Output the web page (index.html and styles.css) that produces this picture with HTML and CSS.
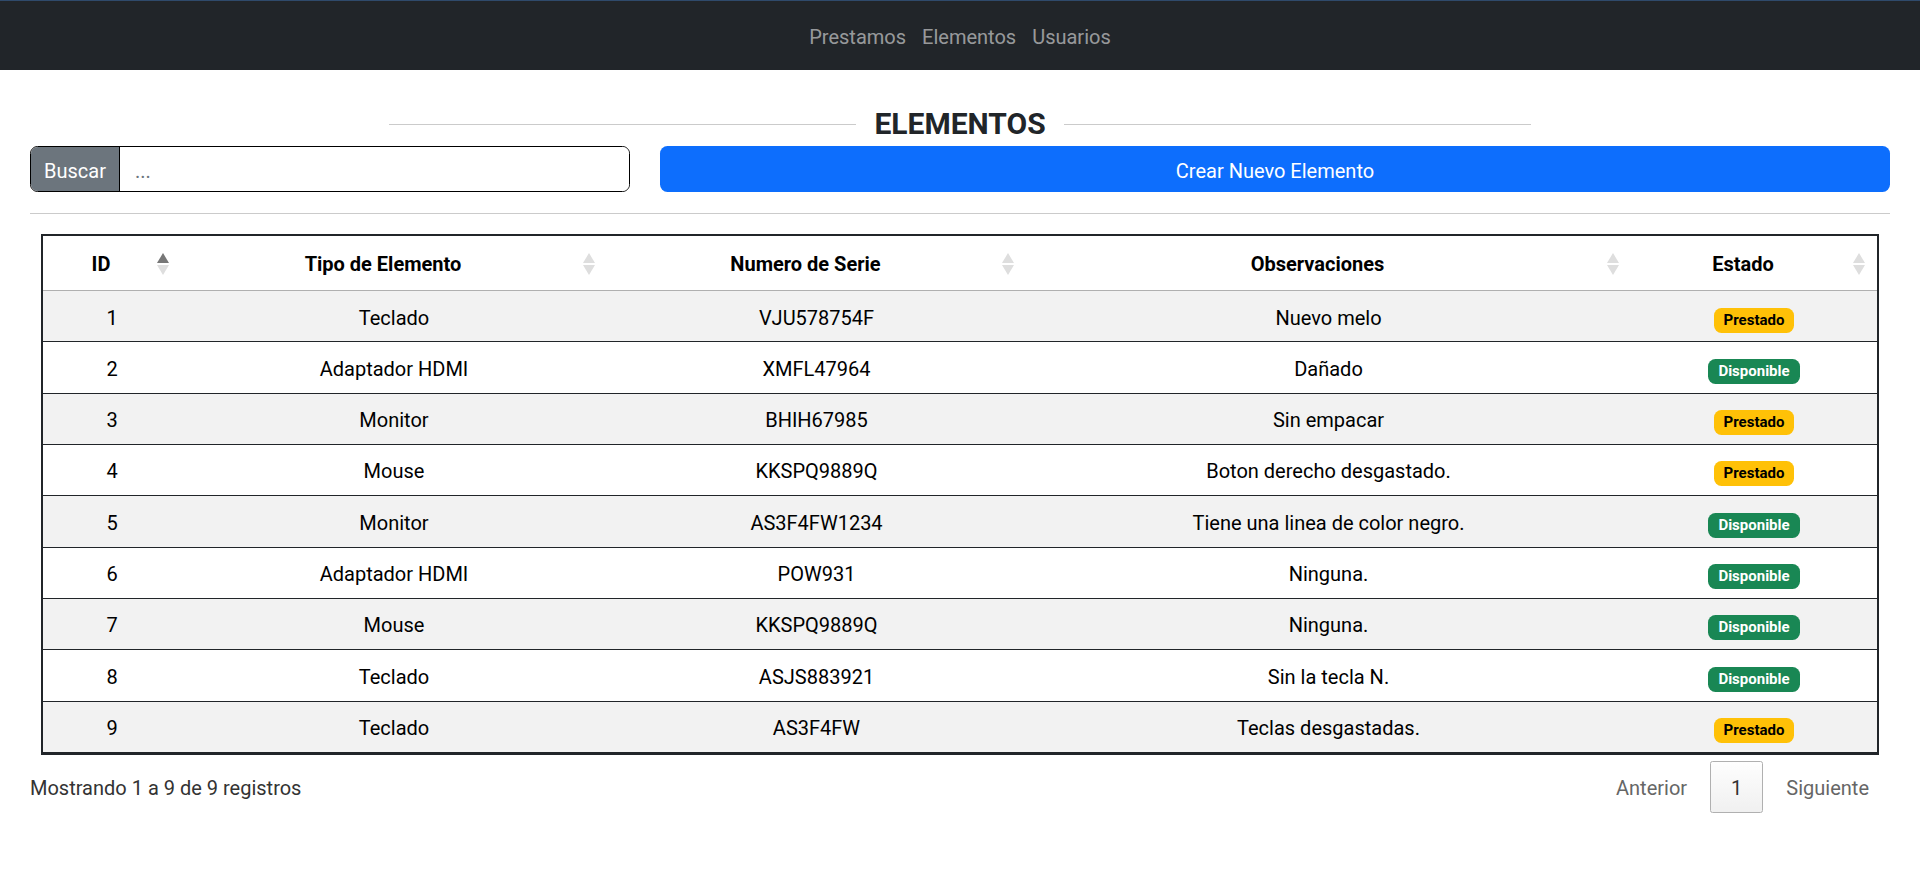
FILE: index.html
```html
<!DOCTYPE html>
<html lang="es">
<head>
<meta charset="utf-8">
<title>Elementos</title>
<link rel="stylesheet" href="styles.css">
</head>
<body>
<nav class="navbar">
  <ul class="nav-list">
    <li><a class="nav-link" href="#">Prestamos</a></li>
    <li><a class="nav-link" href="#">Elementos</a></li>
    <li><a class="nav-link" href="#">Usuarios</a></li>
  </ul>
</nav>
<main class="container">
  <div class="page-title">
    <span class="title-line"></span>
    <h4 class="title-text">ELEMENTOS</h4>
    <span class="title-line"></span>
  </div>
  <div class="toolbar">
    <div class="input-group">
      <span class="input-addon">Buscar</span>
      <input class="input-field" type="text" placeholder="...">
    </div>
    <button class="btn-primary" type="button">Crear Nuevo Elemento</button>
  </div>
  <div class="divider"></div>
  <div class="table-wrap">
    <table class="data-table">
      <colgroup>
        <col class="col-id"><col class="col-tipo"><col class="col-serie"><col class="col-obs"><col class="col-estado">
      </colgroup>
      <thead>
        <tr>
          <th class="sortable sort-asc">ID</th>
          <th class="sortable">Tipo de Elemento</th>
          <th class="sortable">Numero de Serie</th>
          <th class="sortable">Observaciones</th>
          <th class="sortable">Estado</th>
        </tr>
      </thead>
      <tbody>
        <tr class="odd"><td>1</td><td>Teclado</td><td>VJU578754F</td><td>Nuevo melo</td><td><span class="badge badge-warn">Prestado</span></td></tr>
        <tr><td>2</td><td>Adaptador HDMI</td><td>XMFL47964</td><td>Dañado</td><td><span class="badge badge-ok">Disponible</span></td></tr>
        <tr class="odd"><td>3</td><td>Monitor</td><td>BHIH67985</td><td>Sin empacar</td><td><span class="badge badge-warn">Prestado</span></td></tr>
        <tr><td>4</td><td>Mouse</td><td>KKSPQ9889Q</td><td>Boton derecho desgastado.</td><td><span class="badge badge-warn">Prestado</span></td></tr>
        <tr class="odd"><td>5</td><td>Monitor</td><td>AS3F4FW1234</td><td>Tiene una linea de color negro.</td><td><span class="badge badge-ok">Disponible</span></td></tr>
        <tr><td>6</td><td>Adaptador HDMI</td><td>POW931</td><td>Ninguna.</td><td><span class="badge badge-ok">Disponible</span></td></tr>
        <tr class="odd"><td>7</td><td>Mouse</td><td>KKSPQ9889Q</td><td>Ninguna.</td><td><span class="badge badge-ok">Disponible</span></td></tr>
        <tr><td>8</td><td>Teclado</td><td>ASJS883921</td><td>Sin la tecla N.</td><td><span class="badge badge-ok">Disponible</span></td></tr>
        <tr class="odd"><td>9</td><td>Teclado</td><td>AS3F4FW</td><td>Teclas desgastadas.</td><td><span class="badge badge-warn">Prestado</span></td></tr>
      </tbody>
    </table>
  </div>
  <div class="table-footer">
    <div class="table-info">Mostrando 1 a 9 de 9 registros</div>
    <div class="paginate">
      <a class="page-btn disabled">Anterior</a>
      <a class="page-btn current">1</a>
      <a class="page-btn disabled">Siguiente</a>
    </div>
  </div>
</main>
</body>
</html>
```
FILE: styles.css
```css
* { box-sizing: border-box; }
html, body { margin: 0; padding: 0; }
body {
  font-family: Roboto, "Noto Sans", sans-serif;
  font-size: 20px;
  line-height: 30px;
  color: #212529;
  background: #fff;
}
.navbar {
  height: 70px;
  background: #212529;
  border-top: 1px solid #2f4a6b;
  display: flex;
  justify-content: center;
  align-items: center;
}
.nav-list {
  list-style: none;
  margin: 0;
  padding: 0;
  display: flex;
}
.nav-link {
  display: block;
  padding: 11px 8px 9px;
  color: rgba(255,255,255,.55);
  text-decoration: none;
}
.container { padding: 0 30px; }
.page-title {
  width: 1142px;
  margin: 36px auto 4px;
  display: flex;
  align-items: center;
  gap: 18px;
}
.title-line { flex: 1; height: 1px; background: #cbcbcb; }
.title-text {
  margin: 0;
  font-size: 30px;
  line-height: 36px;
  font-weight: 700;
  color: #212529;
}
.toolbar { display: flex; gap: 30px; height: 46px; }
.input-group {
  width: 600px;
  display: flex;
  border: 1px solid #000;
  border-radius: 7.5px;
  overflow: hidden;
}
.input-addon {
  background: #6c757d;
  color: #fff;
  padding: 9px 13px 5px;
  border-right: 1px solid #000;
}
.input-field {
  flex: 1;
  border: 0;
  outline: none;
  padding: 9px 15px 5px;
  font: inherit;
  color: #212529;
}
.input-field::placeholder { color: #6c757d; }
.btn-primary {
  flex: 1;
  border: 0;
  border-radius: 7.5px;
  background: #0d6efd;
  color: #fff;
  font: inherit;
  padding: 3px 0 0;
  cursor: pointer;
}
.divider { height: 1px; background: #cbcbcb; margin: 21px 0 20px; }
.table-wrap { padding: 0 11px; }
.data-table {
  width: 100%;
  table-layout: fixed;
  border-collapse: separate;
  border-spacing: 0;
  border: 2px solid #212529;
  border-bottom-width: 3px;
  color: #000;
}
.col-id { width: 138px; }
.col-tipo { width: 426px; }
.col-serie { width: 419px; }
.col-obs { width: 605px; }
.data-table th {
  position: relative;
  padding: 13px 32px 11px 10px;
  line-height: 30px;
  font-weight: 700;
  text-align: center;
  border-bottom: 1px solid #b0b0b0;
}
.sortable::before, .sortable::after {
  content: "";
  position: absolute;
  right: 12px;
  width: 0; height: 0;
  border-left: 6px solid transparent;
  border-right: 6px solid transparent;
}
.sortable::before { top: 17px; border-bottom: 10px solid #dedede; }
.sortable::after { top: 29px; border-top: 10px solid #dedede; }
.sort-asc::before { border-bottom-color: #777; }
.data-table td {
  padding: 11.5px 10px 8.5px;
  line-height: 30.33px;
  text-align: center;
  border-bottom: 1px solid #212529;
}
.data-table tbody tr:last-child td { border-bottom: 0; }
.data-table tr.odd td { background: #f2f2f2; }
.badge {
  display: inline-block;
  padding: 5px 10px;
  font-size: 15px;
  line-height: 1;
  font-weight: 700;
  border-radius: 7.5px;
}
.badge-warn { background: #ffc107; color: #000; }
.badge-ok { background: #198754; color: #fff; }
.table-footer { display: flex; justify-content: space-between; }
.table-info { padding-top: 18px; color: #333; }
.paginate { padding-top: 6px; display: flex; }
.page-btn {
  padding: 11px 20px 9px;
  margin-left: 2px;
  border: 1px solid transparent;
  border-radius: 2.5px;
  color: #666;
}
.page-btn.current {
  color: #333;
  border-color: #b0b0b0;
  background: linear-gradient(to bottom, #fefefe 0%, #f0f0f0 100%);
}
```
